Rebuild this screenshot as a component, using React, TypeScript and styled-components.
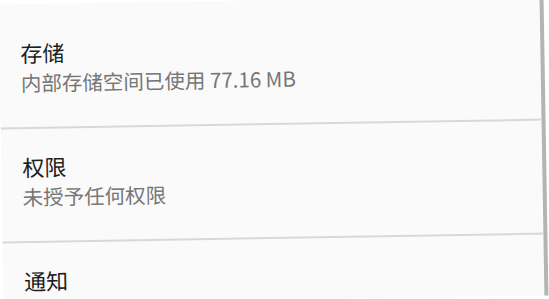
import styled, { createGlobalStyle } from "styled-components";

type Setting = {
  title: string;
  summary?: string;
};

const settings: Setting[] = [
  { title: "存储", summary: "内部存储空间已使用 77.16 MB" },
  { title: "权限", summary: "未授予任何权限" },
  { title: "通知" },
];

export default function App() {
  return (
    <>
      <GlobalStyle />
      <Page>
        <Screen>
          {settings.map((item) => (
            <SettingRow key={item.title}>
              <Title>{item.title}</Title>
              {item.summary && <Summary>{item.summary}</Summary>}
            </SettingRow>
          ))}
        </Screen>
      </Page>
    </>
  );
}

const GlobalStyle = createGlobalStyle`
  html, body {
    margin: 0;
    padding: 0;
    background: #ffffff;
    overflow: hidden;
  }
  body {
    font-family: "Noto Sans CJK SC", "Noto Sans", sans-serif;
  }
`;

const Page = styled.div`
  width: 549px;
  height: 299px;
  overflow: hidden;
  background: #ffffff;
`;

const Screen = styled.section`
  box-sizing: border-box;
  width: 545px;
  height: 300px;
  margin-left: 1px;
  padding-top: 11px;
  background: #fafafa;
  border-right: 4px solid #b4b4b4;
  overflow: hidden;
  transform: rotate(-0.94deg);
  transform-origin: 274px 150px;
`;

const SettingRow = styled.div`
  display: flex;
  flex-direction: column;
  padding: 22px 0 32px 21px;
  border-bottom: 2px solid #d8d8d8;

  &:last-child {
    border-bottom: none;
  }
`;

const Title = styled.div`
  font-size: 22px;
  line-height: 30px;
  color: #1e1e1e;
`;

const Summary = styled.div`
  margin-top: 2px;
  font-size: 20.5px;
  line-height: 26px;
  color: #767676;
`;
